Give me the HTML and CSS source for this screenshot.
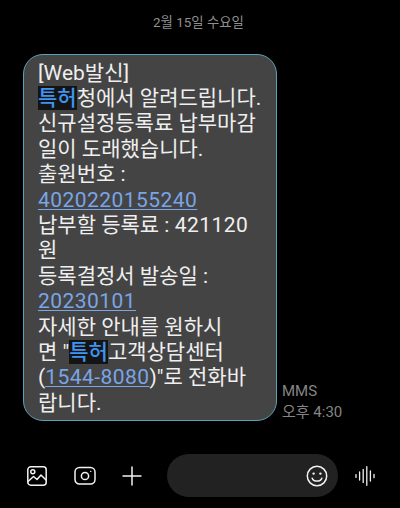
FILE: index.html
```html
<!DOCTYPE html>
<html lang="ko">
<head>
<meta charset="utf-8">
<title>메시지</title>
<link rel="stylesheet" href="styles.css">
</head>
<body>
<main class="screen">
  <div class="date">2월 15일 수요일</div>
  <div class="thread">
    <div class="bubble">
      <div>[Web발신]</div>
      <div><span class="hl">특허</span>청에서 알려드립니다.</div>
      <div>신규설정등록료 납부마감</div>
      <div>일이 도래했습니다.</div>
      <div>출원번호 :</div>
      <div><a class="link">4020220155240</a></div>
      <div>납부할 등록료 : <span class="num">421120</span></div>
      <div>원</div>
      <div>등록결정서 발송일 :</div>
      <div><a class="link">20230101</a></div>
      <div>자세한 안내를 원하시</div>
      <div>면 "<span class="hl">특허</span>고객상담센터</div>
      <div>(<a class="link">1544-8080</a>)"로 전화바</div>
      <div>랍니다.</div>
    </div>
    <div class="meta">
      <div>MMS</div>
      <div>오후 4:30</div>
    </div>
  </div>
  <div class="composer">
    <svg class="icon gallery" viewBox="1 1 20 20" fill="none" stroke="#f2f2f2" stroke-width="1.5" stroke-linejoin="round" stroke-linecap="round">
      <rect x="1.8" y="1.8" width="18.4" height="18.4" rx="3"/>
      <circle cx="6.8" cy="6.8" r="2"/>
      <path d="M2 16.5 L7.5 11.5 L11 14.5 L15 10 L20 15"/>
    </svg>
    <svg class="icon camera" viewBox="0 0 22 20" fill="none" stroke="#f2f2f2" stroke-width="1.5">
      <rect x="1" y="1.5" width="20" height="16.5" rx="4.5"/>
      <circle cx="11" cy="10" r="3.6"/>
      <circle cx="16.7" cy="5.4" r="0.7" fill="#f2f2f2" stroke="none"/>
    </svg>
    <svg class="icon plus" viewBox="0 0 20 20" fill="none" stroke="#f2f2f2" stroke-width="1.5">
      <path d="M10 0.5V19.5M0.5 10H19.5"/>
    </svg>
    <div class="input">
      <svg class="icon smile" viewBox="0 0 22 22" fill="none" stroke="#f2f2f2" stroke-width="1.5" stroke-linecap="round">
        <circle cx="11" cy="11" r="9.7"/>
        <circle cx="7.6" cy="8.6" r="1.2" fill="#f2f2f2" stroke="none"/>
        <circle cx="14.4" cy="8.6" r="1.2" fill="#f2f2f2" stroke="none"/>
        <path d="M6.2 13.2C7.4 17 14.6 17 15.8 13.2"/>
      </svg>
    </div>
    <svg class="icon voice" viewBox="0 0 22 20" fill="none" stroke="#f2f2f2" stroke-width="1.3" stroke-linecap="round">
      <path d="M1 8.6V11.4M4.6 6V14M8.2 3.5V16.5M11.8 0.7V19.3M15.4 5V15M19 8.3V11.7"/>
    </svg>
  </div>
</main>
</body>
</html>
```
FILE: styles.css
```css
* { box-sizing: border-box; }
html, body { margin: 0; background: #000; }
body { font-family: Roboto, "Noto Sans CJK KR", sans-serif; }
.screen {
  width: 400px;
  height: 508px;
  overflow: hidden;
  display: flex;
  flex-direction: column;
  background: #000;
}
.date {
  margin-top: 14px;
  height: 17px;
  line-height: 17px;
  text-align: center;
  font-size: 13.4px;
  color: #8f8f8f;
  padding-right: 3px;
}
.thread {
  margin: 23px 0 0 23px;
  display: flex;
  align-items: flex-end;
  gap: 5px;
}
.bubble {
  width: 254px;
  height: 367px;
  padding: 5.5px 0 0 14px;
  background: #444;
  border: 1.5px solid #5a9fbb;
  border-radius: 20px;
  font-size: 21px;
  line-height: 25.4px;
  color: #efefef;
  white-space: nowrap;
}
.hl {
  background: #141414;
  color: #3f94f2;
  font-weight: 500;
}
.link {
  color: #7aa5e6;
  text-decoration: underline;
  text-underline-offset: 2px;
  text-decoration-thickness: 1px;
  letter-spacing: 0.45px;
}
.num { letter-spacing: 0.45px; }
.meta {
  font-size: 15px;
  line-height: 21px;
  color: #858585;
  margin-bottom: -2px;
}
.composer {
  margin-top: 33px;
  height: 43px;
  display: flex;
  align-items: center;
  padding-left: 27px;
}
.icon { display: block; flex: none; }
.gallery { width: 20px; height: 20px; }
.camera { width: 22px; height: 20px; margin-left: 27px; }
.plus { width: 20px; height: 20px; margin-left: 26px; }
.input {
  width: 171px;
  height: 43px;
  margin-left: 25px;
  padding-right: 10px;
  background: #222;
  border-radius: 21.5px;
  display: flex;
  align-items: center;
  justify-content: flex-end;
}
.smile { width: 22px; height: 22px; }
.voice { width: 22px; height: 20px; margin-left: 17px; }
```
